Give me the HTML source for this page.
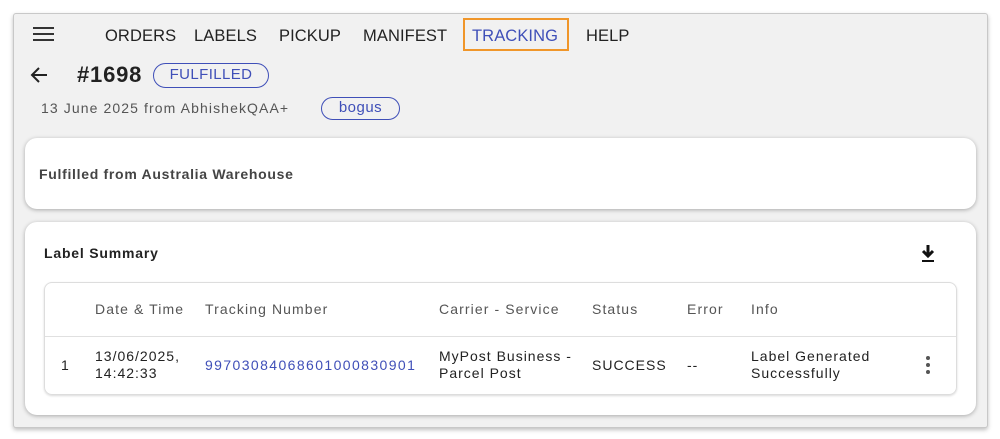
<!DOCTYPE html>
<html><head><style>
*{box-sizing:border-box;margin:0;padding:0}
body{width:1000px;height:439px;background:#fff;font-family:"Liberation Sans",sans-serif;position:relative;overflow:hidden}
.panel{position:absolute;left:13px;top:13px;width:975px;height:415px;background:#f1f1f1;border:1px solid #c8c8c8;border-radius:3px;box-shadow:0 2px 4px rgba(0,0,0,.25)}
.a{position:absolute;white-space:nowrap}
.nav{top:27px;font-size:16.5px;color:#222;letter-spacing:.1px}
.card{position:absolute;left:25px;width:951px;background:#fff;border-radius:12px;box-shadow:0 1px 4px rgba(0,0,0,.3)}
.chip{position:absolute;border:1.3px solid #3f4fb8;border-radius:14px;color:#3f4fb8;text-align:center}
.th{top:301px;font-size:14px;color:#555;letter-spacing:1.1px}
.td{font-size:14px;color:#222;line-height:17px;letter-spacing:1px}
</style></head><body>
<div class="panel"></div>
<div class="a" style="left:33px;top:27px;width:21px;height:2px;background:#333;box-shadow:0 6px 0 #333,0 12px 0 #333"></div>
<div class="a nav" style="left:105px">ORDERS</div>
<div class="a nav" style="left:194px">LABELS</div>
<div class="a nav" style="left:279px">PICKUP</div>
<div class="a nav" style="left:363px">MANIFEST</div>
<div class="a" style="left:463px;top:18px;width:106px;height:33px;border:2px solid #f0962a"></div>
<div class="a nav" style="left:472px;color:#3f4fb8">TRACKING</div>
<div class="a nav" style="left:586px">HELP</div>
<svg class="a" style="left:29px;top:66px" width="20" height="18" viewBox="0 0 20 18"><path d="M18 9H3M10 2L3 9l7 7" stroke="#222" stroke-width="2" fill="none"/></svg>
<div class="a" style="left:77px;top:62px;font-size:22px;font-weight:bold;color:#222;letter-spacing:.8px">#1698</div>
<div class="chip" style="left:153px;top:63px;width:116px;height:25px;font-size:15px;line-height:22px;letter-spacing:.4px">FULFILLED</div>
<div class="a" style="left:41px;top:100px;font-size:14px;color:#555;letter-spacing:1.1px">13 June 2025 from AbhishekQAA+</div>
<div class="chip" style="left:321px;top:97px;width:79px;height:23px;font-size:15px;line-height:20px;letter-spacing:.5px">bogus</div>
<div class="card" style="top:138px;height:71px"><div class="a" style="left:14px;top:28px;font-size:14px;font-weight:bold;color:#444;letter-spacing:.7px">Fulfilled from Australia Warehouse</div></div>
<div class="card" style="top:222px;height:193px">
<div class="a" style="left:19px;top:23px;font-size:14px;font-weight:bold;color:#222;letter-spacing:.8px">Label Summary</div>
<svg class="a" style="left:895px;top:22px" width="16" height="20" viewBox="0 0 16 20"><path d="M8 1v10M3 7l5 5 5-5" stroke="#111" stroke-width="3" fill="none"/><rect x="2" y="16" width="12" height="2" fill="#111"/></svg>
<div class="a" style="left:19px;top:60px;width:913px;height:113px;border:1px solid #ddd;border-radius:8px;box-shadow:0 1px 2px rgba(0,0,0,.15)"><div class="a" style="left:0;top:53px;width:911px;height:1px;background:#e0e0e0"></div></div>
</div>
<div class="a th" style="left:95px">Date &amp; Time</div>
<div class="a th" style="left:205px">Tracking Number</div>
<div class="a th" style="left:439px">Carrier - Service</div>
<div class="a th" style="left:592px">Status</div>
<div class="a th" style="left:687px">Error</div>
<div class="a th" style="left:751px">Info</div>
<div class="a td" style="left:61px;top:357px">1</div>
<div class="a td" style="left:95px;top:348px">13/06/2025,<br>14:42:33</div>
<div class="a td" style="left:205px;top:357px;color:#3f4fb8;letter-spacing:1.4px">9970308406860100083090​1</div>
<div class="a td" style="left:439px;top:348px">MyPost Business -<br>Parcel Post</div>
<div class="a td" style="left:592px;top:357px">SUCCESS</div>
<div class="a td" style="left:687px;top:357px">--</div>
<div class="a td" style="left:751px;top:348px">Label Generated<br>Successfully</div>
<div class="a" style="left:926px;top:356px;width:4px;height:4px;border-radius:2px;background:#555;box-shadow:0 7px 0 #555,0 14px 0 #555"></div>
</body></html>
